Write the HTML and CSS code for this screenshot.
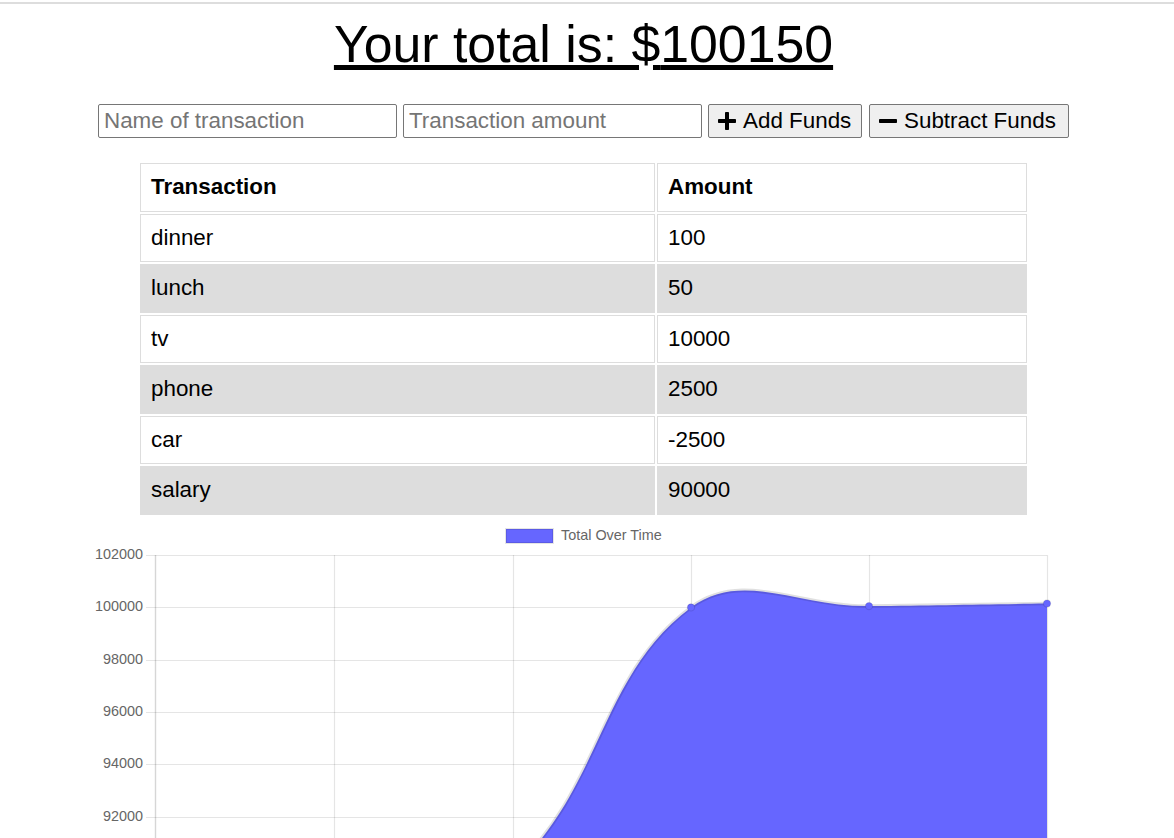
FILE: index.html
```html
<!DOCTYPE html>
<html lang="en">
<head>
<meta charset="utf-8">
<title>Budget Tracker</title>
<link rel="stylesheet" href="styles.css">
</head>
<body>
<div class="topbar"></div>
<main class="page">
  <h1 class="total">Your total is: $<span id="total">100150</span></h1>

  <div class="controls">
    <input class="field" type="text" placeholder="Name of transaction">
    <input class="field" type="number" placeholder="Transaction amount">
    <button class="btn btn-add" type="button">
      <svg class="btn-icon" viewBox="0 0 18 18" aria-hidden="true"><rect x="7" y="0" width="4" height="18" rx="0.8"/><rect x="0" y="7" width="18" height="4" rx="0.8"/></svg>
      <span>Add Funds</span>
    </button>
    <button class="btn btn-sub" type="button">
      <svg class="btn-icon" viewBox="0 0 18 18" aria-hidden="true"><rect x="0" y="7" width="18" height="4" rx="0.8"/></svg>
      <span>Subtract Funds</span>
    </button>
  </div>

  <table class="ledger">
    <thead>
      <tr><th class="col-name">Transaction</th><th class="col-amount">Amount</th></tr>
    </thead>
    <tbody>
      <tr><td>dinner</td><td>100</td></tr>
      <tr><td>lunch</td><td>50</td></tr>
      <tr><td>tv</td><td>10000</td></tr>
      <tr><td>phone</td><td>2500</td></tr>
      <tr><td>car</td><td>-2500</td></tr>
      <tr><td>salary</td><td>90000</td></tr>
    </tbody>
  </table>

  <svg class="chart" width="991" height="420" viewBox="88 517 991 420" aria-label="Total Over Time chart">
    <g class="legend">
      <rect x="506" y="529" width="47" height="14" class="legend-box"/>
      <text x="561" y="536.5" class="legend-text">Total Over Time</text>
    </g>
    <g class="grid">
      <line x1="146" y1="555.5" x2="1047" y2="555.5"/>
      <line x1="146" y1="607.5" x2="1047" y2="607.5"/>
      <line x1="146" y1="660.5" x2="1047" y2="660.5"/>
      <line x1="146" y1="712.5" x2="1047" y2="712.5"/>
      <line x1="146" y1="764.5" x2="1047" y2="764.5"/>
      <line x1="146" y1="817.5" x2="1047" y2="817.5"/>
      <line x1="334.5" y1="555" x2="334.5" y2="974"/>
      <line x1="513.5" y1="555" x2="513.5" y2="974"/>
      <line x1="691.5" y1="555" x2="691.5" y2="974"/>
      <line x1="869.5" y1="555" x2="869.5" y2="974"/>
      <line x1="1047.5" y1="555" x2="1047.5" y2="974"/>
    </g>
    <line class="axis" x1="155.5" y1="555" x2="155.5" y2="974"/>
    <g class="ticks">
      <text x="143" y="555.5">102000</text>
      <text x="143" y="607.5">100000</text>
      <text x="143" y="660">98000</text>
      <text x="143" y="712.5">96000</text>
      <text x="143" y="764.5">94000</text>
      <text x="143" y="817">92000</text>
    </g>
    <path class="area" d="M155,869.4 C226.6,895.6 262.4,934.9 334,934.9 C405.6,934.9 459.3,918.6 513,869.4 C602.1,787.6 599.8,674.8 691,607.4 C742.2,569.5 797.8,606.9 869,606.1 C940.2,605.3 975.8,604.5 1047,603.5 L1047,974 L155,974 Z"/>
    <path class="line" d="M155,869.4 C226.6,895.6 262.4,934.9 334,934.9 C405.6,934.9 459.3,918.6 513,869.4 C602.1,787.6 599.8,674.8 691,607.4 C742.2,569.5 797.8,606.9 869,606.1 C940.2,605.3 975.8,604.5 1047,603.5"/>
    <g class="points">
      <circle cx="691" cy="607.4" r="3.6"/>
      <circle cx="869" cy="606.1" r="3.6"/>
      <circle cx="1047" cy="603.5" r="3.6"/>
    </g>
  </svg>
</main>
</body>
</html>
```
FILE: styles.css
```css
body {
  margin: 0;
  font-family: "Liberation Sans", Arial, sans-serif;
  color: #000;
  background: #fff;
}

.topbar {
  height: 2px;
  margin-top: 2px;
  background: #ddd;
}

.page {
  max-width: 1167px;
}

.total {
  margin: 11px 0 0;
  font-size: 51.8px;
  font-weight: 400;
  line-height: 59px;
  text-align: center;
  text-decoration: underline;
}

.controls {
  display: flex;
  justify-content: center;
  gap: 6px;
  margin-top: 30px;
}

.field {
  box-sizing: border-box;
  width: 299px;
  height: 34px;
  margin: 0;
  padding: 0 5px;
  border: 1px solid #767676;
  border-radius: 2px;
  font-family: "Liberation Sans", Arial, sans-serif;
  font-size: 22.4px;
  color: #000;
  background: #fff;
}

.field::placeholder {
  color: #757575;
}

.btn {
  box-sizing: border-box;
  display: inline-flex;
  align-items: center;
  gap: 7px;
  height: 34px;
  margin: 0;
  padding: 0 9px 0 9px;
  border: 1px solid #767676;
  border-radius: 2px;
  background: #efefef;
  color: #000;
  font-family: "Liberation Sans", Arial, sans-serif;
  font-size: 22.4px;
}

.btn-add {
  width: 154px;
}

.btn-sub {
  width: 200px;
  margin-left: 1px;
}

.btn-icon {
  width: 18px;
  height: 18px;
  fill: #000;
  flex: none;
}

.ledger {
  width: 891px;
  table-layout: fixed;
  border-collapse: separate;
  border-spacing: 2px;
  margin: 23px auto 0;
  font-size: 22.4px;
}

.ledger th,
.ledger td {
  box-sizing: border-box;
  padding: 10.25px 10px;
  line-height: 26px;
  border: 1px solid #ddd;
  text-align: left;
  vertical-align: middle;
}

.ledger th {
  font-weight: 700;
}

.ledger .col-name {
  width: 515px;
}

.ledger tbody tr:nth-child(even) td {
  background: #ddd;
}

.chart {
  display: block;
  margin: 0 auto;
  font-family: "Liberation Sans", Arial, sans-serif;
}

.legend-box {
  fill: #6666ff;
  stroke: rgba(0, 0, 0, 0.1);
  stroke-width: 2;
}

.legend-text {
  font-size: 14.4px;
  fill: #666;
  dominant-baseline: middle;
}

.grid line {
  stroke: rgba(0, 0, 0, 0.1);
  stroke-width: 1.2;
}

.axis {
  stroke: rgba(0, 0, 0, 0.16);
  stroke-width: 1.4;
}

.ticks text {
  font-size: 14.4px;
  fill: #666;
  text-anchor: end;
  dominant-baseline: middle;
}

.area {
  fill: #6666ff;
}

.line {
  fill: none;
  stroke: rgba(0, 0, 0, 0.12);
  stroke-width: 3.6;
}

.points circle {
  fill: #6666ff;
  stroke: rgba(0, 0, 0, 0.1);
  stroke-width: 1.2;
}
```
